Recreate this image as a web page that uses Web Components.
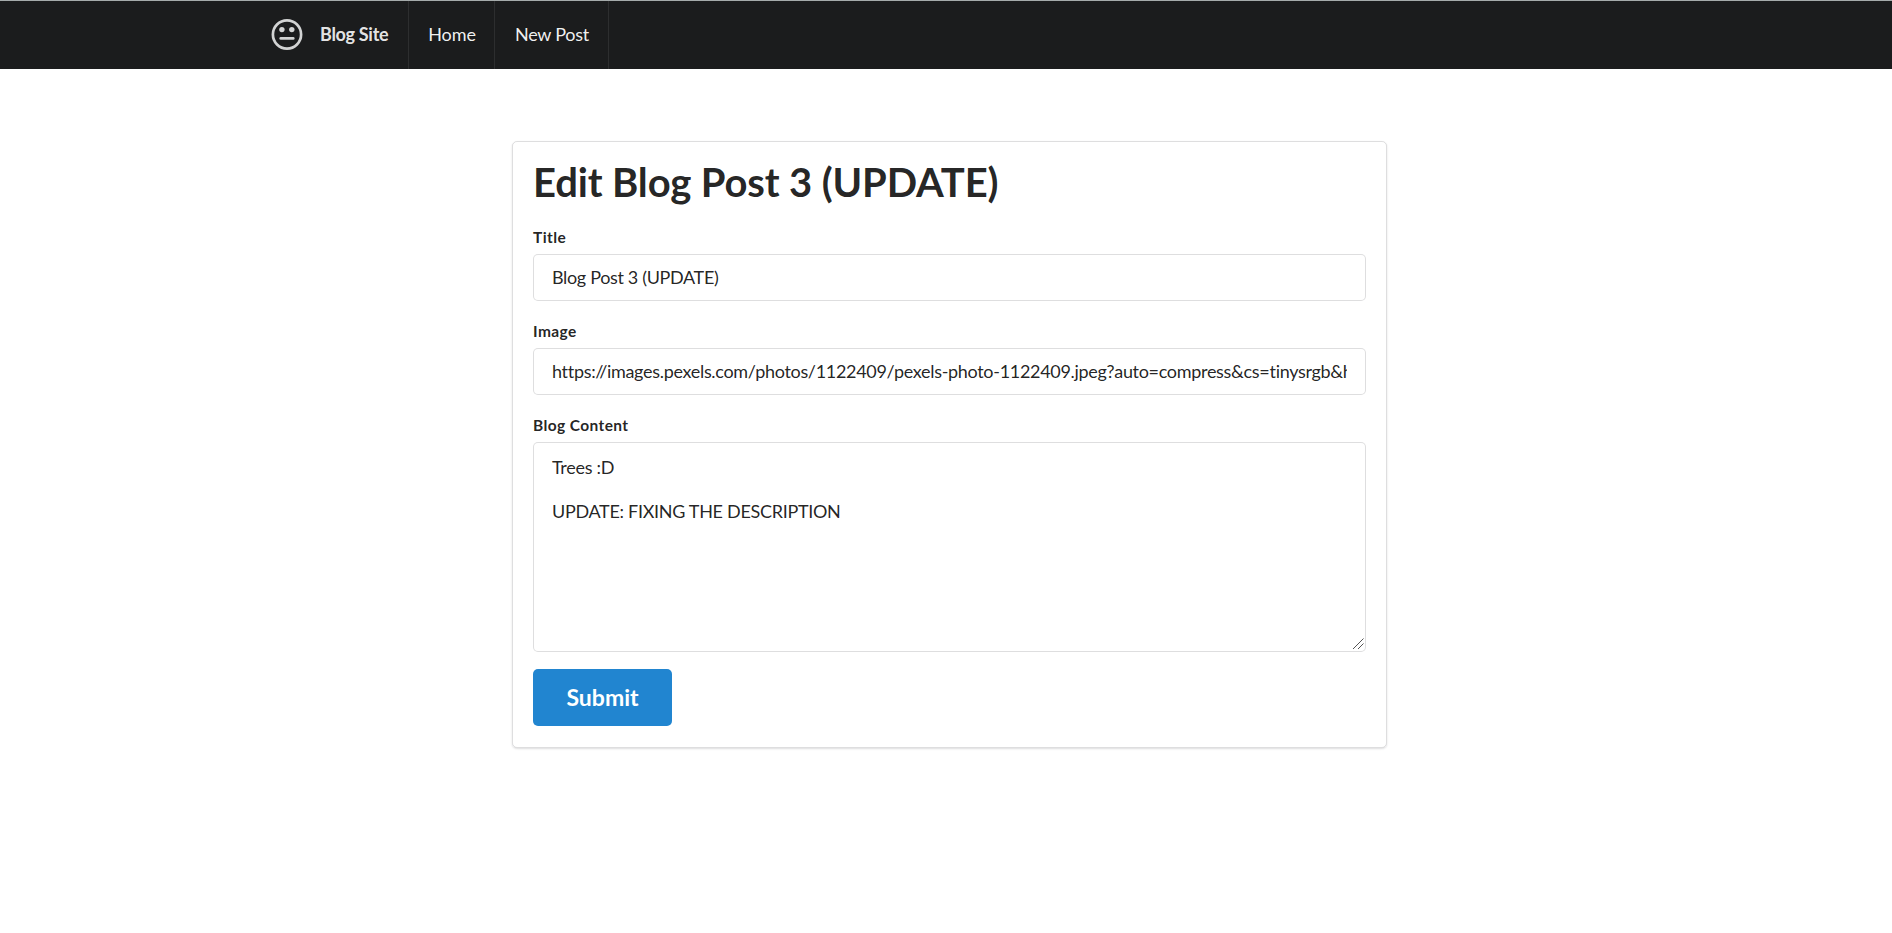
<!DOCTYPE html>
<html lang="en">
<head>
<meta charset="utf-8">
<title>Blog Site</title>
<style>
html,body{margin:0;padding:0;background:#fff}
body{font-family:Lato,"Liberation Sans",sans-serif;font-size:18px;line-height:25px;color:rgba(0,0,0,.87);min-height:100vh;font-variant-ligatures:none}
</style>
</head>
<body>
<blog-nav>
  <nav-item brand>Blog Site</nav-item>
  <nav-item style="--w:86px;--ls:-.1px">Home</nav-item>
  <nav-item style="--w:114px;--ls:-.25px">New Post</nav-item>
</blog-nav>
<blog-card>
  <span slot="title">Edit Blog Post 3 (UPDATE)</span>
  <form-field label="Title" value="Blog Post 3 (UPDATE)" style="--ls:-.34px"></form-field>
  <form-field label="Image" value="https://images.pexels.com/photos/1122409/pexels-photo-1122409.jpeg?auto=compress&amp;cs=tinysrgb&amp;h=750&amp;w=1260" style="--ls:-.31px"></form-field>
  <form-field label="Blog Content" multiline value="Trees :D&#10;&#10;UPDATE: FIXING THE DESCRIPTION" style="--ls:-.3px"></form-field>
  <submit-button>Submit</submit-button>
</blog-card>
<script>
const define = (name, html, setup) => customElements.define(name, class extends HTMLElement {
  connectedCallback() {
    if (this.shadowRoot) return;
    this.attachShadow({ mode: "open" }).innerHTML = html;
    if (setup) setup(this, this.shadowRoot);
  }
});

define("blog-nav", `
<style>
:host{display:block;box-sizing:border-box;height:69px;background:#1b1c1d;border-top:1px solid #a5abab}
nav{display:flex;height:100%;padding-left:250px}
</style>
<nav><slot></slot></nav>`);

define("nav-item", `
<style>
:host{display:flex;box-sizing:border-box;width:var(--w);align-items:center;justify-content:center;border-right:1px solid #2d2e2f;color:rgba(255,255,255,.95);letter-spacing:var(--ls)}
:host([brand]){width:159px;justify-content:flex-start;padding-left:20px;font-weight:700;color:rgba(255,255,255,.9);letter-spacing:-.3px}
span{padding:0 0 2px 1px}
svg{display:none;width:34px;height:34px;margin-right:15px}
:host([brand]) svg{display:block}
</style>
<svg viewBox="0 0 34 34" fill="none" stroke="#d2d3d3" stroke-linecap="round"><circle cx="17" cy="16.5" r="14.1" stroke-width="2.7"/><path d="M10.7 20.4h12.6" stroke-width="2.6"/><circle cx="11.9" cy="11.6" r="2.7" fill="#d2d3d3" stroke="none"/><circle cx="21.8" cy="11.6" r="2.7" fill="#d2d3d3" stroke="none"/></svg>
<span><slot></slot></span>`);

define("blog-card", `
<style>
:host{display:block;box-sizing:border-box;width:875px;height:607px;margin:72px 0 0 512px;padding:15px 20px 0;border:1px solid rgba(34,36,38,.15);border-radius:5px;box-shadow:0 1px 2px 0 rgba(34,36,38,.15)}
h1{margin:0;height:69px;line-height:50px;font-size:40px;font-weight:700;white-space:nowrap;letter-spacing:-.15px}
</style>
<h1><slot name="title"></slot></h1><slot></slot>`);

define("form-field", `
<style>
:host{display:block;position:relative;width:833px;margin-bottom:17px}
label{display:block;height:22px;margin-bottom:6px;line-height:22px;font-size:15.5px;font-weight:700;letter-spacing:.4px}
:host(:not([multiline])){height:77px}
input,textarea{display:block;box-sizing:border-box;width:833px;height:47px;margin:0;padding:0 18px 2px;border:1px solid rgba(34,36,38,.15);border-radius:5px;outline:0;background:#fff;color:rgba(0,0,0,.87);font:18px Lato,"Liberation Sans",sans-serif;font-variant-ligatures:none;letter-spacing:var(--ls)}
textarea{height:210px;padding:13px 18px;line-height:22px;resize:none}
svg{display:none;position:absolute;right:2px;bottom:3px;width:11px;height:11px}
:host([multiline]) svg{display:block}
</style>
<label></label><svg viewBox="0 0 11 11" fill="none" stroke="#555" stroke-width="1"><path d="M0 11L10.5 .5M5 11l5.5-5.5"/></svg>`, (host, root) => {
  root.querySelector("label").textContent = host.getAttribute("label");
  const box = document.createElement(host.hasAttribute("multiline") ? "textarea" : "input");
  box.value = host.getAttribute("value");
  root.querySelector("label").after(box);
});

define("submit-button", `
<style>
:host{display:block}
button{display:block;width:139px;height:57px;margin:0;padding:0 0 2px;border:0;border-radius:5px;background:#2185d0;color:#fff;font:700 23px Lato,"Liberation Sans",sans-serif}
</style>
<button type="button"><slot></slot></button>`);

</script>
</body>
</html>
